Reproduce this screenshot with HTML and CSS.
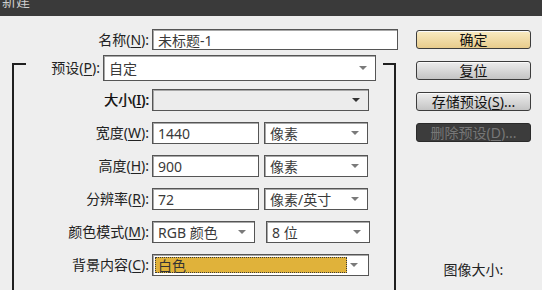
FILE: index.html
```html
<!DOCTYPE html>
<html lang="zh-CN">
<head>
    <meta charset="UTF-8">
    <title>新建</title>
    <link rel="stylesheet" href="styles.css">
</head>
<body>
    <div class="titlebar"><span>新建</span></div>

    <div class="main">
        <div class="form">
            <div class="row name-row">
                <label class="lbl">名称(<u>N</u>):</label>
                <div class="field name-field">未标题-1</div>
            </div>

            <div class="group">
                <div class="group-head">
                    <label class="lbl preset-lbl">预设(<u>P</u>):</label>
                    <div class="field select preset-select"><span>自定</span><i class="arrow"></i></div>
                </div>

                <div class="rows">
                    <div class="row">
                        <label class="lbl lbl-disabled">大小(<u>I</u>):</label>
                        <div class="field select disabled wide"><span></span><i class="arrow dark"></i></div>
                    </div>
                    <div class="row">
                        <label class="lbl">宽度(<u>W</u>):</label>
                        <div class="field num">1440</div>
                        <div class="field select unit"><span>像素</span><i class="arrow"></i></div>
                    </div>
                    <div class="row">
                        <label class="lbl">高度(<u>H</u>):</label>
                        <div class="field num">900</div>
                        <div class="field select unit"><span>像素</span><i class="arrow"></i></div>
                    </div>
                    <div class="row">
                        <label class="lbl">分辨率(<u>R</u>):</label>
                        <div class="field num">72</div>
                        <div class="field select unit"><span>像素/英寸</span><i class="arrow"></i></div>
                    </div>
                    <div class="row">
                        <label class="lbl">颜色模式(<u>M</u>):</label>
                        <div class="field select mode"><span>RGB 颜色</span><i class="arrow"></i></div>
                        <div class="field select unit"><span>8 位</span><i class="arrow"></i></div>
                    </div>
                    <div class="row">
                        <label class="lbl">背景内容(<u>C</u>):</label>
                        <div class="field select wide bg-select"><span class="swatch">白色</span><i class="arrow"></i></div>
                    </div>
                </div>
            </div>
        </div>

        <div class="actions">
            <div class="btn primary">确定</div>
            <div class="btn">复位</div>
            <div class="btn">存储预设(<u>S</u>)...</div>
            <div class="btn disabled">删除预设(<u>D</u>)...</div>
            <div class="image-size">图像大小:</div>
        </div>
    </div>
</body>
</html>
```

FILE: styles.css
```css
* {
    box-sizing: border-box;
}

body {
    margin: 0;
    height: 290px;
    overflow: hidden;
    background: #eeeeee;
    color: #222;
    font-family: "Noto Sans", "Noto Sans CJK SC", sans-serif;
    font-size: 14px;
}

u {
    text-decoration-thickness: 1px;
    text-underline-offset: 2px;
}

.titlebar {
    height: 16px;
    padding-left: 2px;
    background: #3a3a3a;
    color: #cfcfcf;
    overflow: hidden;
}

.titlebar span {
    display: block;
    line-height: 16px;
    margin-top: -7px;
}

.main {
    display: flex;
    height: 274px;
    padding: 13px 0 0 12px;
}

/* left side: fields */
.form {
    display: flex;
    flex-direction: column;
    width: 386px;
}

.row {
    display: flex;
    align-items: center;
    gap: 3px;
    height: 22px;
}

.lbl {
    flex: 0 0 135px;
    text-align: right;
    white-space: nowrap;
    line-height: 1;
}

.lbl-disabled {
    color: #111;
    text-shadow: 0.5px 0 0 #555;
}

.name-row {
    height: 21px;
}

.name-row .lbl {
    flex-basis: 137px;
}

.field {
    display: flex;
    align-items: center;
    height: 100%;
    padding-left: 5px;
    background: #fff;
    border: 1px solid #555;
    box-shadow: inset 1px 1px 0 #a8a8a8;
    color: #3a3a3a;
    white-space: nowrap;
}

.name-field {
    width: 246px;
}

.select span {
    flex: 1;
}

.arrow {
    width: 0;
    height: 0;
    margin-right: 8px;
    border-left: 4px solid transparent;
    border-right: 4px solid transparent;
    border-top: 4px solid #7a7a7a;
}

.arrow.dark {
    border-top-color: #333;
}

/* preset group box */
.group {
    flex: 1;
    width: 384px;
    margin-top: 13px;
    border: 2px solid #1f1f1f;
    border-bottom: none;
}

.group-head {
    display: flex;
    align-items: center;
    gap: 3px;
    width: fit-content;
    height: 26px;
    margin: -10px 0 0 12px;
    padding-right: 7px;
    background: #eeeeee;
}

.preset-lbl {
    flex-basis: 74px;
}

.preset-select {
    width: 273px;
}

.rows {
    display: flex;
    flex-direction: column;
    gap: 11px;
    margin-top: 8px;
}

.wide {
    width: 217px;
}

.disabled {
    background: #ececec;
}

.num {
    width: 107px;
}

.unit {
    width: 104px;
    margin-left: 2px;
}

.mode {
    width: 103px;
    margin-right: 6px;
}

.bg-select {
    padding: 2px;
}

.bg-select .swatch {
    flex: 0 0 192px;
    align-self: stretch;
    padding-left: 3px;
    background: #e0b23a;
    outline: 1px dotted #3a3a3a;
    outline-offset: -1px;
    color: #333;
    line-height: 18px;
}

.bg-select .arrow {
    margin-left: auto;
}

/* right side: buttons */
.actions {
    display: flex;
    flex-direction: column;
    gap: 12px;
    width: 115px;
    margin-left: 18px;
    padding-top: 1px;
}

.btn {
    height: 19px;
    border: 1px solid #3c3c3c;
    border-radius: 3px;
    background: linear-gradient(#ededed, #c4c4c4);
    box-shadow: inset 0 1px 0 #fafafa;
    color: #111;
    text-align: center;
    line-height: 17px;
    white-space: nowrap;
}

.btn.primary {
    background: linear-gradient(#f9ebc2, #e8cc8c);
}

.btn.disabled {
    background: #3c3c3c;
    border-color: #2a2a2a;
    box-shadow: none;
    color: #777;
}

.image-size {
    margin-top: auto;
    padding-bottom: 10px;
    line-height: 20px;
    text-align: center;
}
```
